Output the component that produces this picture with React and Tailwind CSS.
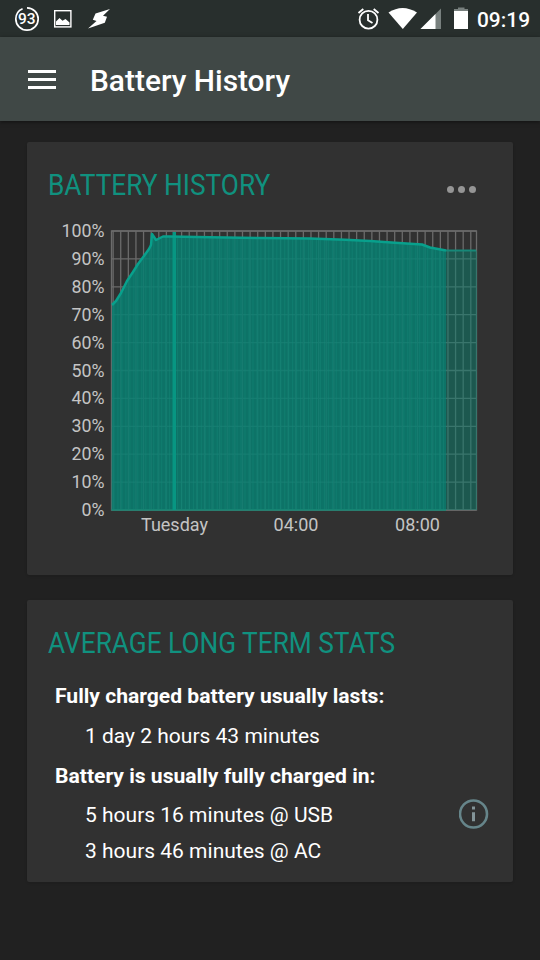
import { useId } from 'react';

const PLOT = { left: 111.5, right: 476.5, top: 231, bottom: 510 };
const MIDNIGHT_X = 174;
const QUARTER_WIDTH = 7.61;

const levels = [100, 90, 80, 70, 60, 50, 40, 30, 20, 10, 0];

const history = [
  [112, 305], [116, 301], [121, 293], [127, 281], [133, 272], [138, 264],
  [144, 256], [149, 249], [151, 245], [152, 234], [154, 237], [156, 240],
  [160, 238], [163, 236.5], [170, 236.5], [210, 237.3], [260, 238], [310, 238.6],
  [345, 239.8], [370, 241], [395, 242.8], [422, 244.5], [430, 247.5], [446, 250.5],
];

const timeLabels = [
  { x: 174.5, label: 'Tuesday' },
  { x: 296, label: '04:00' },
  { x: 417.5, label: '08:00' },
];

function StatusBar() {
  return (
    <div className="flex h-[37px] w-full items-center bg-[#282f2d] text-white">
      <svg width="540" height="37" viewBox="0 0 540 37" className="block font-[Roboto,sans-serif]">
        <circle cx="27" cy="19" r="11.2" fill="none" stroke="#fff" strokeWidth="1.7" strokeDasharray="65.4 5" transform="rotate(-90 27 19)" />
        <text x="26.8" y="24.3" textAnchor="middle" fontSize="15.5" fontWeight="500" fill="#fff">93</text>
        <rect x="54.7" y="10.7" width="16.2" height="16.2" fill="none" stroke="#fff" strokeWidth="1.4" />
        <path d="M56 25v-3.5l3.5-3.5 3 2.7 3-1.7 4 3.5V25z" fill="#fff" />
        <path d="M110 9 95.5 13.5 92.8 19.8 96.5 21 88 28.5 104.8 22.7 107 16.8 103 15.8z" fill="#fff" />

        <g fill="none" stroke="#fff" strokeWidth="1.8">
          <circle cx="368.5" cy="19.7" r="8.9" />
          <path d="M368 14v6.2l4.5 2.8M358.5 13l4.8-4M378.5 13l-4.8-4" />
        </g>
        <path d="M388.5 12.5Q402.5 3.5 417 12.5L402.8 29z" fill="#fff" />
        <path d="M441 8.5V29H420.5z" fill="#78807e" />
        <path d="M435.5 14V29H420.5z" fill="#fff" />
        <path d="M458 7.5h6.5V9H468v2h-14V9h4z" fill="#78807e" />
        <path d="M454 11h14v18h-14z" fill="#fff" />
        <text x="477" y="26.8" fontSize="21" fontWeight="500" fill="#fff" textLength="53" lengthAdjust="spacingAndGlyphs">09:19</text>
      </svg>
    </div>
  );
}

function AppBar() {
  return (
    <header className="flex h-[84px] items-center bg-[#404846] pl-7 text-white shadow-[0_1px_4px_rgba(0,0,0,0.5)]">
      <button className="flex w-7 flex-col gap-[5px]" aria-label="Menu">
        <span className="h-[3px] bg-white" />
        <span className="h-[3px] bg-white" />
        <span className="h-[3px] bg-white" />
      </button>
      <h1 className="ml-[34px] pt-1 text-[29.9px] leading-none font-medium">Battery History</h1>
    </header>
  );
}

function CardTitle({ children }) {
  return (
    <h2 className="inline-block origin-left scale-x-[0.875] text-[30px] leading-9 whitespace-nowrap text-[#10917f]">
      {children}
    </h2>
  );
}

function HistoryChart() {
  const clipId = useId();
  const line = history.map(([x, y]) => `${x},${y}`).join(' ');
  const area = `${line} 446,${PLOT.bottom} ${PLOT.left},${PLOT.bottom}`;
  const quarters = Array.from({ length: 48 }, (_, i) => MIDNIGHT_X + (i - 8) * QUARTER_WIDTH).filter((x) => x < PLOT.right - 2);
  const samples = Array.from({ length: 84 }, (_, i) => 114 + i * 3.97);

  return (
    <svg width="486" height="330" viewBox="27 220 486 330" className="block font-[Roboto,sans-serif]">
      <clipPath id={clipId}>
        <polygon points={area} />
      </clipPath>

      <g stroke="#6b6b6b" strokeWidth="1.3">
        {levels.map((level) => {
          const y = PLOT.bottom - level * 2.79;
          return <line key={level} x1={PLOT.left} x2={PLOT.right} y1={y} y2={y} />;
        })}
        {quarters.map((x) => (
          <line key={x} x1={x} x2={x} y1={PLOT.top} y2={PLOT.bottom} />
        ))}
        <rect x={PLOT.left} y={PLOT.top} width={PLOT.right - PLOT.left} height={PLOT.bottom - PLOT.top} fill="none" />
      </g>

      <polygon points={area} fill="#068071" fillOpacity="0.84" />
      <g clipPath={`url(#${clipId})`} stroke="#148878" strokeWidth="1.2" strokeOpacity="0.45">
        {samples.map((x) => (
          <line key={x} x1={x} x2={x} y1={PLOT.top} y2={PLOT.bottom} />
        ))}
      </g>
      <rect x="446" y="250.5" width="31" height="259.5" fill="#08806e" fillOpacity="0.5" />
      <line x1={PLOT.left} x2="446" y1={PLOT.bottom} y2={PLOT.bottom} stroke="#168673" strokeWidth="1.5" />
      <rect x="172.5" y="232" width="3.5" height="278" fill="#079682" />
      <polyline points={line} fill="none" stroke="#08a08c" strokeWidth="2.5" strokeLinejoin="round" />
      <line x1="446" x2="476" y1="250.5" y2="250.5" stroke="#168878" strokeWidth="2" />

      {levels.map((level) => (
        <text key={level} x="104.5" y={PLOT.bottom - level * 2.79 + 6} textAnchor="end" fontSize="17.8" fill="#c4c4c4">
          {level}%
        </text>
      ))}
      {timeLabels.map(({ x, label }) => (
        <text key={label} x={x} y="531" textAnchor="middle" fontSize="18" fill="#c4c4c4">
          {label}
        </text>
      ))}
    </svg>
  );
}

function HistoryCard() {
  return (
    <section className="h-[433px] rounded-xs bg-[#313131] shadow-sm">
      <div className="flex h-[78px] items-start justify-between pt-[25px] pr-[37px] pl-[21px]">
        <CardTitle>BATTERY HISTORY</CardTitle>
        <button className="mt-[19px] flex gap-1" aria-label="More options">
          <span className="size-[7px] rounded-full bg-[#959595]" />
          <span className="size-[7px] rounded-full bg-[#959595]" />
          <span className="size-[7px] rounded-full bg-[#959595]" />
        </button>
      </div>
      <HistoryChart />
    </section>
  );
}

function StatsCard() {
  return (
    <section className="h-[282px] rounded-xs bg-[#313131] pt-[25px] pr-6 pl-[21px] shadow-sm">
      <CardTitle>AVERAGE LONG TERM STATS</CardTitle>
      <div className="mt-[15px] pl-[7px] text-[21px] text-white">
        <p className="h-10 text-[21.1px] leading-10 font-bold whitespace-nowrap">Fully charged battery usually lasts:</p>
        <p className="h-10 pl-[30px] leading-10">1 day 2 hours 43 minutes</p>
        <p className="h-10 text-[21.1px] leading-10 font-bold whitespace-nowrap">Battery is usually fully charged in:</p>
        <div className="flex items-start justify-between pl-[30px]">
          <div className="-mt-px">
            <p className="h-9 leading-10">5 hours 16 minutes @ USB</p>
            <p className="h-9 leading-10">3 hours 46 minutes @ AC</p>
          </div>
          <svg width="30" height="30" viewBox="0 0 30 30" className="mt-[3px]">
            <circle cx="14.5" cy="15" r="13.5" fill="none" stroke="#66858a" strokeWidth="2.6" />
            <path d="M13 7.5h3v3h-3zM13 13.2h3v9h-3z" fill="#839498" />
          </svg>
        </div>
      </div>
    </section>
  );
}

export default function App() {
  return (
    <div className="h-[960px] w-[540px] overflow-hidden bg-[#212121] font-[Roboto,sans-serif]">
      <StatusBar />
      <AppBar />
      <main className="flex flex-col gap-[25px] px-[27px] pt-[21px]">
        <HistoryCard />
        <StatsCard />
      </main>
    </div>
  );
}
